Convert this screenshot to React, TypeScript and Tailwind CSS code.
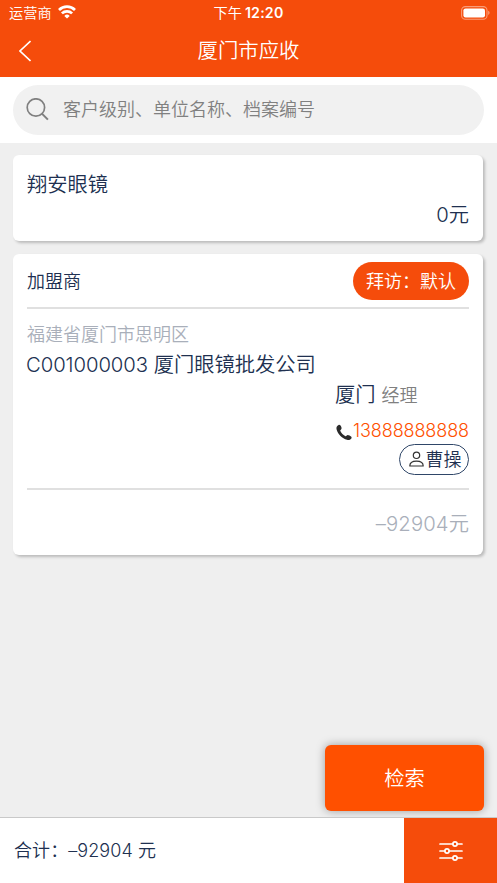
import React from 'react';

function WifiIcon() {
  return (
    <svg className="w-[18px] h-[14px] -mt-px" viewBox="0 0 18 14" fill="none" stroke="white" strokeWidth="2.7">
      <path d="M1 5a11.400 11.400 0 0 1 16 0" />
      <path d="M3.900 8.400a7.300 7.300 0 0 1 10.200 0" />
      <path d="M9 13.600 6.300 10.900a3.900 3.900 0 0 1 5.400 0Z" fill="white" stroke="none" />
    </svg>
  );
}

function BatteryIcon() {
  return (
    <svg className="w-[29px] h-[14px] -mt-px" viewBox="0 0 29 14" fill="none">
      <rect x="0.6" y="0.6" width="25.4" height="12.6" rx="3.8" stroke="white" strokeOpacity="0.45" strokeWidth="1.1" />
      <rect x="2.4" y="2.4" width="21.6" height="9" rx="2.2" fill="white" />
      <path d="M27.3 4.8c1.6.7 1.6 3.5 0 4.2Z" fill="white" fillOpacity="0.55" />
    </svg>
  );
}

function Header() {
  return (
    <header className="h-[77px] bg-[#f54c0b] text-white">
      <div className="grid grid-cols-3 items-center h-[26px] pl-[9px] pr-[7px]">
        <div className="flex items-center gap-[6px] text-[14.2px]">
          <span>运营商</span>
          <WifiIcon />
        </div>
        <div className="-ml-[2px] text-center text-[14.2px] font-normal whitespace-nowrap">
          下午<span className="ml-[3px] font-semibold tracking-[0.2px]">12:20</span>
        </div>
        <div className="flex justify-end">
          <BatteryIcon />
        </div>
      </div>
      <div className="grid grid-cols-[60px_1fr_60px] items-center h-[50px]">
        <svg className="ml-[19px] w-3 h-[22px]" viewBox="0 0 12 22" fill="none" stroke="white" strokeWidth="1.6">
          <path d="M11.5 1 1 11l10.5 10" />
        </svg>
        <h1 className="text-center text-[20.4px]">厦门市应收</h1>
      </div>
    </header>
  );
}

function SearchBar() {
  return (
    <div className="h-[66px] bg-white px-[13px] pt-[8px]">
      <div className="flex items-center h-[50px] rounded-full bg-[#f1f1f1] pl-[13px] text-[#808080]">
        <svg className="w-[23px] h-[23px] -mt-[2px]" viewBox="0 0 23 23" fill="none" stroke="currentColor" strokeWidth="1.7">
          <circle cx="9.9" cy="9.5" r="8.7" />
          <path d="m15.9 15.6 6 6" strokeWidth="2" />
        </svg>
        <span className="ml-[14px] -mt-[2px] text-[18px]">客户级别、单位名称、档案编号</span>
      </div>
    </div>
  );
}

function PhoneIcon() {
  return (
    <svg className="w-[17px] h-[17px] mt-[3px]" viewBox="0 0 17 17" fill="#2b2b2b">
      <path d="M2.6.9C3.700.4 4.500 1.200 5.100 2.500c.7 1.400.7 2.500-.2 3.200-.7.500-.8.900-.4 1.600 1.100 2.100 2.500 3.600 4.600 4.700.7.400 1.100.2 1.600-.5.600-.8 1.500-.7 2.900.1 1.600.9 2.400 1.600 1.900 2.600-.8 1.500-2.600 2.200-4.500 1.600C6.200 14.600 1.900 10.400.6 5.500 0 3.400.9 1.600 2.600.9Z" />
    </svg>
  );
}

function UserIcon() {
  return (
    <svg className="w-[15px] h-[16px] -mt-[2px]" viewBox="0 0 15 16" fill="none" stroke="#333" strokeWidth="1.200">
      <circle cx="7.500" cy="4.300" r="3.200" />
      <path d="M.8 15c0-3.200 2.700-4.900 6.700-4.900s6.700 1.700 6.700 4.900Z" strokeLinejoin="round" />
    </svg>
  );
}

function SummaryCard() {
  return (
    <section className="flex flex-col justify-between h-[86px] rounded-[6px] bg-white px-[14px] pt-[15px] pb-[12px] text-[20.3px] leading-[30px] shadow-[2px_2px_3px_rgba(0,0,0,0.22)]">
      <div>翔安眼镜</div>
      <div className="text-right">0元</div>
    </section>
  );
}

function CustomerCard() {
  return (
    <section className="h-[301px] mt-[13px] rounded-[6px] bg-white px-[14px] shadow-[2px_2px_3px_rgba(0,0,0,0.22)]">
      <div className="flex items-center justify-between h-[55px] border-b-2 border-[#e0e0e0]">
        <span className="pt-[2px] text-[18px]">加盟商</span>
        <button className="w-[116px] h-[38px] pt-px rounded-full bg-[#f54c0b] text-[18px] text-white">拜访：默认</button>
      </div>
      <div className="h-[181px] pt-[12px] border-b-2 border-[#e0e0e0]">
        <div className="text-[18px] leading-[28px] text-[#a9afba]">福建省厦门市思明区</div>
        <div className="-ml-px text-[20.3px] leading-[31px] whitespace-nowrap">
          <span className="tracking-[-0.08px]">C001000003</span> 厦门眼镜批发公司
        </div>
        <div className="w-[134px] ml-auto">
          <div className="flex items-baseline gap-[6px] leading-[30px]">
            <span className="text-[20.3px]">厦门</span>
            <span className="text-[18px] text-[#808080]">经理</span>
          </div>
          <div className="flex items-center justify-end h-[27px] mt-[6px] text-[18px] tracking-[-0.1px] text-[#ff5000]">
            <PhoneIcon />
            13888888888
          </div>
          <div className="flex items-center justify-center gap-[2px] w-[70px] h-[31px] pl-[2px] ml-auto rounded-full border border-[#2f4668] text-[18px]">
            <UserIcon />
            <span>曹操</span>
          </div>
        </div>
      </div>
      <div className="flex items-center justify-end h-[65px] pt-[3px] text-[20.3px] text-[#a9afba]">
        <span className="tracking-[0.1px]">–92904</span>元
      </div>
    </section>
  );
}

function FilterIcon() {
  return (
    <svg className="w-6 h-5" viewBox="0 0 24 20" fill="#f54c0b" stroke="white" strokeWidth="1.7">
      <path d="M1 3h22M1 10h22M1 17h22" strokeLinecap="round" />
      <circle cx="16" cy="3" r="2.100" />
      <circle cx="8" cy="10" r="2.100" />
      <circle cx="16" cy="17" r="2.100" />
    </svg>
  );
}

function Footer() {
  return (
    <footer className="flex h-[66px] border-t border-[#c9c9c9] bg-white">
      <div className="flex flex-1 items-center pl-[14px] text-[18px] tracking-[0.08px]">合计：–92904 元</div>
      <button className="flex items-center justify-center w-[93px] bg-[#f54c0b]">
        <FilterIcon />
      </button>
    </footer>
  );
}

export default function App() {
  return (
    <div className="flex flex-col w-full h-[883px] overflow-hidden bg-[#efefef] text-[#203050] font-[350] font-['Inter','Noto_Sans_CJK_SC',sans-serif]">
      <Header />
      <SearchBar />
      <main className="flex flex-col flex-1 pl-[13px] pr-[14px] pt-[12px]">
        <SummaryCard />
        <CustomerCard />
        <button className="self-end w-[159px] h-[66px] -mr-px mt-auto mb-[6px] pt-[2px] rounded-[6px] bg-[#ff5000] text-[20.3px] text-white shadow-[0_0_10px_rgba(0,0,0,0.35)]">
          检索
        </button>
      </main>
      <Footer />
    </div>
  );
}
